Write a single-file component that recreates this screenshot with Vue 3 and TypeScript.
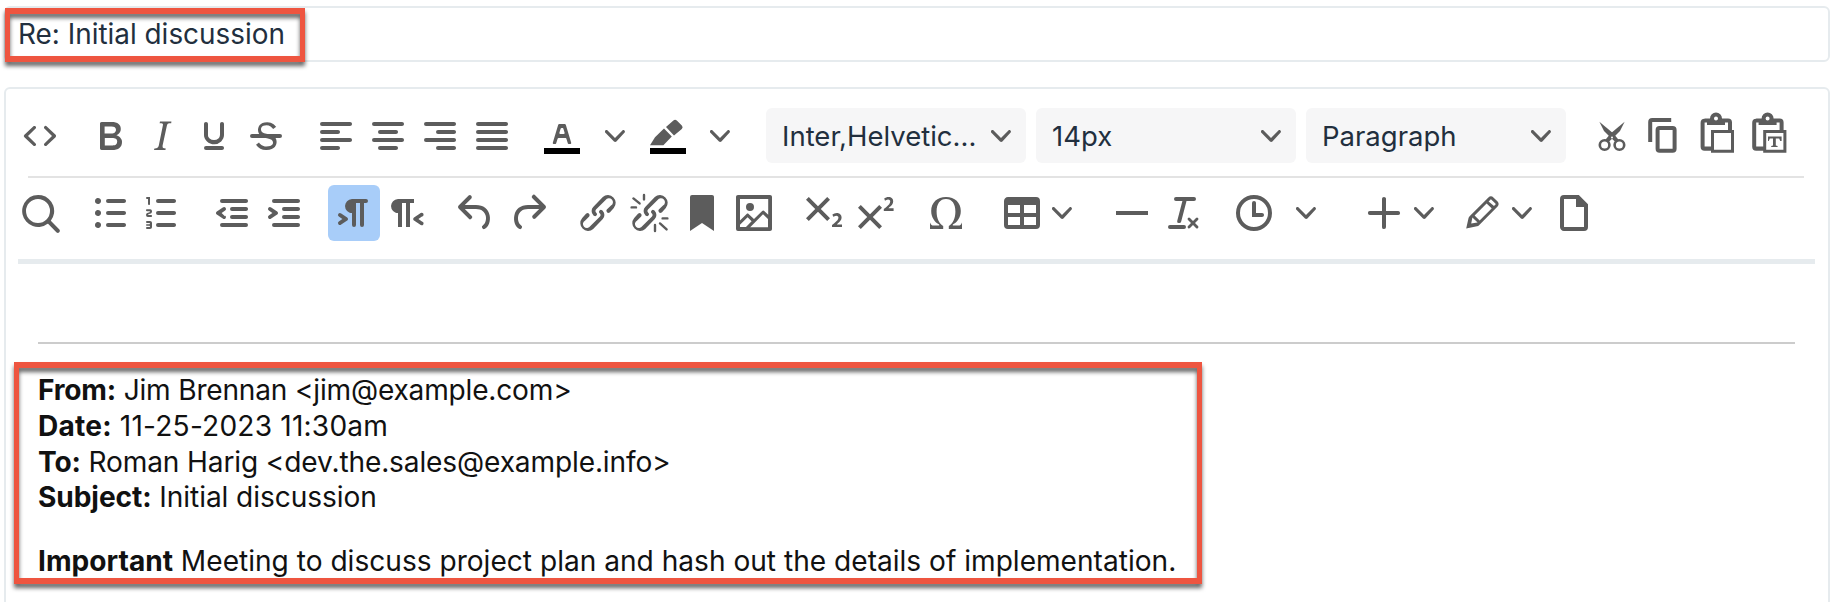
<script setup lang="ts">
type Item = { i?: string; chev?: 'lg' | 'lg2' | 'sm'; on?: boolean }
type Group = { cls?: string; items: Item[] }

const P: Record<string, string> = {
  code: 'M9.8 15.7c.3.3.3.8 0 1-.3.4-.9.4-1.2 0l-4.4-4.1a.8.8 0 0 1 0-1.2l4.4-4.2c.3-.3.9-.3 1.2 0 .3.3.3.8 0 1.1L6 12l3.8 3.7ZM14.2 15.7c-.3.3-.3.8 0 1 .4.4.9.4 1.2 0l4.4-4.1c.3-.3.3-.9 0-1.2l-4.4-4.2a.8.8 0 0 0-1.2 0c-.3.3-.3.8 0 1.1L18 12l-3.8 3.7Z',
  bold: 'M7.8 19c-.3 0-.5 0-.6-.2l-.2-.5V5.7c0-.2 0-.4.2-.5l.6-.2h5c1.5 0 2.7.3 3.5 1 .7.6 1.1 1.4 1.1 2.5a3 3 0 0 1-.6 1.9c-.4.6-1 1-1.6 1.2.4.1.9.3 1.3.6s.8.7 1 1.2c.4.4.5 1 .5 1.6 0 1.3-.4 2.3-1.3 3-.8.7-2.1 1-3.8 1H7.8Zm5-8.3c.6 0 1.2-.1 1.6-.5.4-.3.6-.7.6-1.3 0-1.1-.8-1.7-2.3-1.7H9.3v3.5h3.4Zm.5 6c.7 0 1.3-.1 1.7-.4.4-.4.6-.9.6-1.5s-.2-1-.7-1.4c-.4-.3-1-.4-2-.4H9.4v3.8h4Z',
  italic: 'm16.7 4.7-.1.9h-.3c-.6 0-1 0-1.4.3-.3.3-.4.6-.5 1.1l-2.1 9.8v.6c0 .5.4.8 1.4.8h.2l-.2.8H8l.2-.8h.2c1.1 0 1.8-.5 2-1.5l2-9.8.1-.5c0-.6-.4-.8-1.4-.8h-.3l.2-.9h5.8Z',
  underline: 'M16 5c.6 0 1 .4 1 1v5.5a4 4 0 0 1-.4 1.8l-1 1.4a5.3 5.3 0 0 1-5.5 1 5 5 0 0 1-1.6-1c-.5-.4-.8-.9-1.1-1.4a4 4 0 0 1-.4-1.8V6c0-.6.4-1 1-1s1 .4 1 1v5.5c0 .3 0 .6.2 1l.6.7a3.3 3.3 0 0 0 2.2.8 3.4 3.4 0 0 0 2.2-.8c.3-.2.4-.5.6-.8l.2-.9V6c0-.6.4-1 1-1ZM8 17h8c.6 0 1 .4 1 1s-.4 1-1 1H8a1 1 0 0 1 0-2Z',
  strike: 'M15.6 8.5c-.5-.7-1-1.1-1.3-1.3-.6-.4-1.3-.6-2-.6-2.7 0-2.8 1.7-2.8 2.1 0 1.6 1.8 2 3.2 2.3 4.4.9 4.6 2.8 4.6 3.9 0 1.4-.7 4.1-5 4.1A6.2 6.2 0 0 1 7 16.4l1.5-1.1c.4.6 1.6 2 3.7 2 1.6 0 2.5-.4 3-1 .3-.4.3-.8.3-1.1 0-1.2-1-1.7-3-2.1-1.3-.3-4.5-1-4.5-4.1 0-1.4.8-3.9 4.6-3.9 1.4 0 2.4.5 3 .9.7.4 1.1 1 1.5 1.4l-1.5 1.1ZM5 11h14a1 1 0 0 1 0 2H5a1 1 0 0 1 0-2Z',
  al: 'M5 5h14c.6 0 1 .4 1 1s-.4 1-1 1H5a1 1 0 1 1 0-2Zm0 4h8c.6 0 1 .4 1 1s-.4 1-1 1H5a1 1 0 1 1 0-2Zm0 8h8c.6 0 1 .4 1 1s-.4 1-1 1H5a1 1 0 0 1 0-2Zm0-4h14c.6 0 1 .4 1 1s-.4 1-1 1H5a1 1 0 0 1 0-2Z',
  ac: 'M5 5h14c.6 0 1 .4 1 1s-.4 1-1 1H5a1 1 0 1 1 0-2Zm3 4h8c.6 0 1 .4 1 1s-.4 1-1 1H8a1 1 0 1 1 0-2Zm0 8h8c.6 0 1 .4 1 1s-.4 1-1 1H8a1 1 0 0 1 0-2Zm-3-4h14c.6 0 1 .4 1 1s-.4 1-1 1H5a1 1 0 0 1 0-2Z',
  ar: 'M5 5h14c.6 0 1 .4 1 1s-.4 1-1 1H5a1 1 0 1 1 0-2Zm6 4h8c.6 0 1 .4 1 1s-.4 1-1 1h-8a1 1 0 0 1 0-2Zm0 8h8c.6 0 1 .4 1 1s-.4 1-1 1h-8a1 1 0 0 1 0-2Zm-6-4h14c.6 0 1 .4 1 1s-.4 1-1 1H5a1 1 0 0 1 0-2Z',
  aj: 'M5 5h14c.6 0 1 .4 1 1s-.4 1-1 1H5a1 1 0 1 1 0-2Zm0 4h14c.6 0 1 .4 1 1s-.4 1-1 1H5a1 1 0 1 1 0-2Zm0 4h14c.6 0 1 .4 1 1s-.4 1-1 1H5a1 1 0 0 1 0-2Zm0 4h14c.6 0 1 .4 1 1s-.4 1-1 1H5a1 1 0 0 1 0-2Z',
  color: 'M8.7 16h-.8a.5.5 0 0 1-.5-.6l2.7-9c.1-.3.3-.4.5-.4h2.8c.2 0 .4.1.5.4l2.7 9a.5.5 0 0 1-.5.6h-.8a.5.5 0 0 1-.4-.4l-.7-2.2c0-.3-.3-.4-.5-.4h-3.4c-.2 0-.4.1-.5.4l-.7 2.2c0 .3-.2.4-.4.4Zm2.6-7.6-.6 2a.5.5 0 0 0 .5.6h1.6a.5.5 0 0 0 .5-.6l-.6-2c0-.3-.3-.4-.5-.4h-.4c-.2 0-.4.1-.5.4Z',
  marker: 'M14.7 4.3a1.2 1.2 0 0 1 1.7 0l2.5 2.5a1.2 1.2 0 0 1 0 1.7L15 11.800 11 7.500l3.700-3.200ZM10 8.250l3.900 4-4.200 4.400H3l2.500-4L10 8.250Z',
  copy: 'M15.600 3H6.100a2 2 0 0 0-2 2v10h2V5h9.500V3ZM16.300 7H9.800a2 2 0 0 0-2 2v9.400a2 2 0 0 0 2 2h6.500a2 2 0 0 0 2-2V9a2 2 0 0 0-2-2Zm0 11.400H9.800V9h6.500v9.400Z',
  paste: 'M6.300 3.200H9a3 3 0 0 1 6 0h3a2 2 0 0 1 2 2V9h1v11.400H9.500v-1H6.300a2 2 0 0 1-2-2v-12a2 2 0 0 1 2-2ZM12 2.200a1 1 0 1 0 0 2 1 1 0 0 0 0-2ZM6.300 5.200v12h3.200V9H18V5.200h-1.500v1.300h-9V5.200h-1.200ZM11 10.500v8.400h8.500v-8.400H11Z',
  pastetext: 'M6.100 3.200H8.800a3 3 0 0 1 6 0h3a2 2 0 0 1 2 2V9h1.400v11.400H9.600v-1H6.100a2 2 0 0 1-2-2v-12a2 2 0 0 1 2-2ZM11.800 2.200a1 1 0 1 0 0 2 1 1 0 0 0 0-2ZM6.100 5.200v12h3.500V9h8.200V5.200h-1.500v1.300h-9V5.200h-1.200ZM11.100 10.500v8.400h8.600v-8.400h-8.600ZM12 12.300h6.800v2.200h-.7l-.5-1.200h-1.700v3.400l.9.3v.5h-3.200v-.5l.9-.3v-3.400h-1.600l-.5 1.200H12v-2.200Z',
  search: 'M16 17.3a8 8 0 1 1 1.4-1.4l4.3 4.4a1 1 0 0 1-1.4 1.4l-4.4-4.4Zm-5-.3a6 6 0 1 0 0-12 6 6 0 0 0 0 12Z',
  bullist: 'M11 5h8c.6 0 1 .4 1 1s-.4 1-1 1h-8a1 1 0 0 1 0-2Zm0 6h8c.6 0 1 .4 1 1s-.4 1-1 1h-8a1 1 0 0 1 0-2Zm0 6h8c.6 0 1 .4 1 1s-.4 1-1 1h-8a1 1 0 0 1 0-2ZM4.5 6c0-.4.1-.8.4-1 .3-.4.7-.5 1.1-.5.4 0 .8.1 1 .4.4.3.5.7.5 1.1 0 .4-.1.8-.4 1-.3.4-.7.5-1.1.5-.4 0-.8-.1-1-.4-.4-.3-.5-.7-.5-1.1Zm0 6c0-.4.1-.8.4-1 .3-.4.7-.5 1.1-.5.4 0 .8.1 1 .4.4.3.5.7.5 1.1 0 .4-.1.8-.4 1-.3.4-.7.5-1.1.5-.4 0-.8-.1-1-.4-.4-.3-.5-.7-.5-1.1Zm0 6c0-.4.1-.8.4-1 .3-.4.7-.5 1.1-.5.4 0 .8.1 1 .4.4.3.5.7.5 1.1 0 .4-.1.8-.4 1-.3.4-.7.5-1.1.5-.4 0-.8-.1-1-.4-.4-.3-.5-.7-.5-1.1Z',
  numlist: 'M10 17h8c.6 0 1 .4 1 1s-.4 1-1 1h-8a1 1 0 0 1 0-2Zm0-6h8c.6 0 1 .4 1 1s-.4 1-1 1h-8a1 1 0 0 1 0-2Zm0-6h8c.6 0 1 .4 1 1s-.4 1-1 1h-8a1 1 0 1 1 0-2ZM6 4v3.5c0 .3-.2.5-.5.5a.5.5 0 0 1-.5-.5V5h-.5a.5.5 0 0 1 0-1H6Zm-1 8.8.2.2h1.3c.3 0 .5.2.5.5s-.2.5-.5.5H4.900a1 1 0 0 1-.9-1V13c0-.4.3-.8.6-1l1.2-.4.2-.3a.2.2 0 0 0-.2-.2H4.500a.5.5 0 0 1-.5-.5c0-.3.2-.5.5-.5h1.600c.5 0 .9.4.9 1v.1c0 .4-.3.8-.6 1l-1.200.4-.2.3ZM7 17v2c0 .6-.4 1-1 1H4.500a.5.5 0 0 1 0-1h1.200c.2 0 .3-.1.3-.3 0-.2-.1-.3-.3-.3H4.400a.4.4 0 1 1 0-.8h1.300c.2 0 .3-.1.3-.3 0-.2-.1-.3-.3-.3H4.500a.5.5 0 1 1 0-1H6c.6 0 1 .4 1 1Z',
  outdent: 'M7 5h12c.6 0 1 .4 1 1s-.4 1-1 1H7a1 1 0 1 1 0-2Zm5 4h7c.6 0 1 .4 1 1s-.4 1-1 1h-7a1 1 0 0 1 0-2Zm0 4h7c.6 0 1 .4 1 1s-.4 1-1 1h-7a1 1 0 0 1 0-2Zm-5 4h12a1 1 0 0 1 0 2H7a1 1 0 0 1 0-2Zm1.600-3.200L6.800 12l1.800-1.200a1 1 0 0 0-1.200-1.600l-3 2a1 1 0 0 0 0 1.600l3 2a1 1 0 1 0 1.200-1.600Z',
  indent: 'M7 5h12c.6 0 1 .4 1 1s-.4 1-1 1H7a1 1 0 1 1 0-2Zm5 4h7c.6 0 1 .4 1 1s-.4 1-1 1h-7a1 1 0 0 1 0-2Zm0 4h7c.6 0 1 .4 1 1s-.4 1-1 1h-7a1 1 0 0 1 0-2Zm-5 4h12a1 1 0 0 1 0 2H7a1 1 0 0 1 0-2Zm-2.600-3.800L6.200 12l-1.800-1.200a1 1 0 0 1 1.200-1.600l3 2a1 1 0 0 1 0 1.600l-3 2a1 1 0 1 1-1.200-1.600Z',
  ltr: 'M11 5h7a1 1 0 0 1 0 2h-1v11a1 1 0 0 1-2 0V7h-2v11a1 1 0 0 1-2 0v-6c-.5 0-1 0-1.4-.3A3.4 3.4 0 0 1 7.8 10a3.3 3.3 0 0 1 0-2.8 3.4 3.4 0 0 1 1.8-1.8L11 5ZM4.4 16.2 6.2 15l-1.8-1.2a1 1 0 0 1 1.2-1.6l3 2a1 1 0 0 1 0 1.6l-3 2a1 1 0 1 1-1.2-1.6Z',
  rtl: 'M8 5h8v2h-2v12h-2V7h-2v12H8v-7c-.5 0-1 0-1.4-.3A3.4 3.4 0 0 1 4.8 10a3.3 3.3 0 0 1 0-2.8 3.4 3.4 0 0 1 1.8-1.8L8 5Zm12 11.2a1 1 0 1 1-1 1.6l-3-2a1 1 0 0 1 0-1.6l3-2a1 1 0 1 1 1 1.6L18.2 15l1.8 1.2Z',
  undo: 'M6.4 8H12c3.7 0 6.2 2 6.8 5.1.6 2.7-.4 5.6-2.3 6.8a1 1 0 0 1-1-1.8c1.1-.7 1.8-2.7 1.4-4.6-.5-2.1-2.1-3.5-4.9-3.5H6.4l3.3 3.3a1 1 0 1 1-1.4 1.4l-5-5a1 1 0 0 1 0-1.4l5-5a1 1 0 0 1 1.4 1.4L6.4 8Z',
  redo: 'M17.6 10H12c-2.8 0-4.4 1.4-4.9 3.5-.4 2 .3 3.9 1.4 4.6a1 1 0 1 1-1 1.8c-2-1.2-2.9-4.1-2.3-6.8.6-3 3-5.1 6.8-5.1h5.6l-3.3-3.3a1 1 0 1 1 1.4-1.4l5 5a1 1 0 0 1 0 1.4l-5 5a1 1 0 0 1-1.4-1.4l3.3-3.3Z',
  link: 'M6.2 12.3a1 1 0 0 1 1.4 1.4l-2 2a2 2 0 1 0 2.6 2.8l4.8-4.8a1 1 0 0 0 0-1.4 1 1 0 1 1 1.4-1.3 2.9 2.9 0 0 1 0 4L9.6 20a3.9 3.9 0 0 1-5.5-5.5l2-2.2Zm11.6-.6a1 1 0 0 1-1.4-1.4l2.1-2a2 2 0 1 0-2.7-2.8L11 10.3a1 1 0 0 0 0 1.4A1 1 0 1 1 9.6 13a2.9 2.9 0 0 1 0-4L14.4 4a3.9 3.9 0 0 1 5.5 5.5l-2 2.2Z',
  bookmark: 'M6 4v17l6-4 6 4V4c0-.6-.4-1-1-1H7a1 1 0 0 0-1 1Z',
  image: 'm5 15.7 3.3-3.2c.3-.3.7-.3 1 0L12 15l4.1-4c.3-.4.8-.4 1 0l2 1.9V5H5v10.7ZM5 18v1h3l2.8-2.9-2-2L5 17.9Zm14-3-2.5-2.4-6.4 6.5H19v-4ZM4 3h16c.6 0 1 .4 1 1v16c0 .6-.4 1-1 1H4a1 1 0 0 1-1-1V4c0-.6.4-1 1-1Zm6 8a2 2 0 1 0 0-4 2 2 0 0 0 0 4Z',
  sub: 'm10.4 10 4.6 4.6-1.4 1.4L9 11.4 4.4 16 3 14.6 7.6 10 3 5.4 4.4 4 9 8.6 13.6 4 15 5.4 10.4 10ZM21 19h-5v-1l1-.8 1.7-1.6c.3-.4.5-.8.5-1.2 0-.3 0-.6-.2-.7-.2-.2-.5-.3-.9-.3a2 2 0 0 0-.8.2l-.7.3-.4-1.1 1-.6 1.2-.2c.8 0 1.4.3 1.8.7.4.4.6.9.6 1.5s-.2 1.1-.5 1.6a8 8 0 0 1-1.3 1.3l-.6.6h2.6V19Z',
  sup: 'M15 9.4 10.4 14l4.6 4.6-1.4 1.4L9 15.4 4.4 20 3 18.6 7.6 14 3 9.4 4.4 8 9 12.6 13.6 8 15 9.4Zm5.9 1.6h-5v-1l1-.8 1.7-1.6c.3-.5.5-.9.5-1.3 0-.3 0-.5-.2-.7-.2-.2-.5-.3-.9-.3l-.8.2-.7.4-.4-1.2c.2-.2.5-.4 1-.5.3-.2.8-.2 1.2-.2.7 0 1.3.2 1.7.6.4.4.6.9.6 1.5s-.2 1.1-.5 1.6a8 8 0 0 1-1.3 1.3l-.6.6h2.6V11Z',
  omega: 'M4 20v-3.200l.5 1 .7.4h3.400v-.4C6.400 16.600 4.600 14.300 4.600 11c0-4.200 3-7 7.400-7s7.400 2.800 7.400 7c0 3.300-1.800 5.600-4 6.800v.4h3.400l.7-.4.5-1V20h-6.600v-1.500c2-1 3.300-3.700 3.300-7.200 0-3.900-1.700-6.300-4.700-6.300s-4.700 2.400-4.700 6.300c0 3.500 1.300 6.200 3.300 7.200V20H4Z',
  table: 'M19 4a2 2 0 0 1 2 2v12a2 2 0 0 1-2 2H5a2 2 0 0 1-2-2V6c0-1.1.9-2 2-2h14ZM5 14v4h6v-4H5Zm14 0h-6v4h6v-4Zm0-6h-6v4h6V8ZM5 12h6V8H5v4Z',
  hr: 'M4 11h16v2H4z',
  clear: 'M13.2 6a1 1 0 0 1 0 .2l-2.6 10a1 1 0 0 1-1 .8h-.2a.8.8 0 0 1-.8-1l2.6-10H8a1 1 0 1 1 0-2h9a1 1 0 0 1 0 2h-3.8ZM5 18h7a1 1 0 0 1 0 2H5a1 1 0 0 1 0-2Zm13 1.5L16.5 18 15 19.5a.7.7 0 0 1-1-1l1.5-1.5-1.5-1.5a.7.7 0 0 1 1-1l1.5 1.5 1.5-1.5a.7.7 0 0 1 1 1L17.5 17l1.5 1.5a.7.7 0 0 1-1 1Z',
  time: 'M12 19a7 7 0 1 0 0-14 7 7 0 0 0 0 14Zm0 2a9 9 0 1 1 0-18 9 9 0 0 1 0 18ZM16 12h-3V7c0-.6-.4-1-1-1a1 1 0 0 0-1 1v7h5c.6 0 1-.4 1-1s-.4-1-1-1Z',
  plus: 'M12 4c.5 0 1 .4 1 .9V11h6a1 1 0 0 1 .1 2H13v6a1 1 0 0 1-2 .1V13H5a1 1 0 0 1-.1-2H11V5c0-.6.4-1 1-1Z',
  pencil: 'm19.8 8.8-9.4 9.4c-.2.2-.5.4-.9.4l-5.4 1.2 1.2-5.4.5-.8 9.4-9.4c.7-.7 1.8-.7 2.5 0l2.1 2.1c.7.7.7 1.8 0 2.5Zm-2-.2 1-.9v-.3l-2.2-2.2a.3.3 0 0 0-.3 0l-1 1L18 8.5Zm-1 1-2.5-2.4-6 6 2.5 2.5 6-6Zm-7 7.1-2.6-2.4-.6 3 3.1-.6Z',
  page: 'M14.4 3H7a2 2 0 0 0-2 2v14c0 1.1.9 2 2 2h10a2 2 0 0 0 2-2V7.6L14.4 3ZM17 19H7V5h6v4h4v10Z',
}

const row1a: Group[] = [
  { items: [{ i: 'code' }] },
  { items: [{ i: 'bold' }, { i: 'italic' }, { i: 'underline' }, { i: 'strike' }] },
  { items: [{ i: 'al' }, { i: 'ac' }, { i: 'ar' }, { i: 'aj' }] },
  { items: [{ i: 'color' }, { chev: 'lg2' }, { i: 'marker' }, { chev: 'lg' }] },
]
const selects = ['Inter,Helvetic...', '14px', 'Paragraph']
const row2: Group[] = [
  { items: [{ i: 'search' }] },
  { items: [{ i: 'bullist' }, { i: 'numlist' }] },
  { items: [{ i: 'outdent' }, { i: 'indent' }] },
  { items: [{ i: 'ltr', on: true }, { i: 'rtl' }] },
  { items: [{ i: 'undo' }, { i: 'redo' }] },
  { items: [{ i: 'link' }, { i: 'unlink' }, { i: 'bookmark' }, { i: 'image' }] },
  { items: [{ i: 'sub' }, { i: 'sup' }] },
  { items: [{ i: 'omega' }] },
  { cls: 'wide6', items: [{ i: 'table' }, { chev: 'sm' }] },
  { items: [{ i: 'hr' }, { i: 'clear' }] },
  { items: [{ i: 'time' }, { chev: 'lg' }] },
  { cls: 'wide8', items: [{ i: 'plus' }, { chev: 'sm' }] },
  { items: [{ i: 'pencil' }, { chev: 'sm' }] },
  { cls: 'tight', items: [{ i: 'page' }] },
]
const clip = ['cut', 'copy', 'paste', 'pastetext']
const chevron = 'M8.7 2.2c.3-.3.8-.3 1 0 .4.4.4.9 0 1.2L5.7 7.8c-.3.3-.9.3-1.2 0L.2 3.4a.8.8 0 0 1 0-1.2c.3-.3.8-.3 1.1 0L5 6l3.7-3.8Z'
const fillRule = (name?: string) => (name === 'image' || name === 'strike' ? 'nonzero' : 'evenodd')
</script>

<template>
  <div class="page">
    <div class="subject">Re: Initial discussion</div>

    <div class="editor">
      <div class="toolbar">
        <div class="row first">
          <div v-for="(g, gi) in row1a" :key="gi" class="group">
            <template v-for="(it, ii) in g.items" :key="ii">
              <span v-if="it.chev" class="chev" :class="it.chev">
                <svg width="20" height="20" viewBox="0 0 10 10"><path :d="chevron" /></svg>
              </span>
              <span v-else class="btn">
                <svg width="48" height="48" viewBox="0 0 24 24" :fill-rule="fillRule(it.i)">
                  <path v-if="it.i === 'color' || it.i === 'marker'" d="M3 18h18v3H3z" class="black" />
                  <path :d="P[it.i as string]" />
                </svg>
              </span>
            </template>
          </div>
          <div class="group selects">
            <div v-for="s in selects" :key="s" class="select">
              <span>{{ s }}</span>
              <svg width="20" height="20" viewBox="0 0 10 10"><path :d="chevron" /></svg>
            </div>
          </div>
          <div class="group clip">
            <span v-for="c in clip" :key="c" class="btn">
              <svg v-if="c === 'cut'" width="48" height="48" viewBox="0 0 24 24">
                <path d="M5.700 4.900 12.700 10.800 15.400 14 14 15.200 11.500 13 8 9.500Z" />
                <path d="M18.300 4.900 11.300 10.800 8.600 14 10 15.200 12.500 13 16 9.500Z" />
                <circle cx="12" cy="12.800" r=".5" fill="#fff" />
                <circle cx="8.300" cy="16.500" r="2.400" fill="none" stroke="#5c5c5c" stroke-width="1.300" />
                <circle cx="15.700" cy="16.500" r="2.400" fill="none" stroke="#5c5c5c" stroke-width="1.300" />
              </svg>
              <svg v-else width="48" height="48" viewBox="0 0 24 24" fill-rule="evenodd"><path :d="P[c]" /></svg>
            </span>
          </div>
        </div>
        <div class="sep"></div>
        <div class="row second">
          <div v-for="(g, gi) in row2" :key="gi" class="group" :class="g.cls">
            <template v-for="(it, ii) in g.items" :key="ii">
              <span v-if="it.chev" class="chev" :class="it.chev">
                <svg width="20" height="20" viewBox="0 0 10 10"><path :d="chevron" /></svg>
              </span>
              <span v-else class="btn" :class="{ on: it.on }">
                <svg v-if="it.i === 'unlink'" width="48" height="48" viewBox="0 0 24 24">
                  <path fill-rule="evenodd" :d="P.link" />
                  <path class="spike" d="M3.700 4.700 6.800 7.200M9 3v2.200M2.800 9.200H5M18.300 14.700h2.400M17 17.200l3.300 3M14.500 18v3" />
                </svg>
                <svg v-else width="48" height="48" viewBox="0 0 24 24" :fill-rule="fillRule(it.i)">
                  <path :d="P[it.i as string]" />
                </svg>
              </span>
            </template>
          </div>
        </div>
      </div>
      <div class="toolbar-line"></div>

      <div class="content">
        <hr class="rule" />
        <div class="headers">
          <div class="l-from"><b>From:</b> Jim Brennan &lt;jim@example.com&gt;</div>
          <div class="l-date"><b>Date:</b> 11-25-2023 11:30am</div>
          <div class="l-to"><b>To:</b> Roman Harig &lt;dev.the.sales@example.info&gt;</div>
          <div class="l-subj"><b>Subject:</b> Initial discussion</div>
        </div>
        <p class="body"><b>Important</b> Meeting to discuss project plan and hash out the details of implementation.</p>
      </div>
    </div>

    <div class="mark mark-subject"></div>
    <div class="mark mark-body"></div>
  </div>
</template>

<style scoped>
.page {
  position: relative;
  width: 1842px;
  height: 602px;
  overflow: hidden;
  background: #fff;
  padding: 6px 12px 0 4px;
  box-sizing: border-box;
  font-family: Inter, "Liberation Sans", sans-serif;
}
.subject {
  height: 56px;
  box-sizing: border-box;
  border: 2px solid #e6ebee;
  border-radius: 6px;
  padding-left: 12px;
  line-height: 52px;
  color: #222f3e;
  font-size: 27.9px;
}
.editor {
  margin-top: 25px;
  height: 600px;
  box-sizing: border-box;
  border: 2px solid #e6ebee;
  border-radius: 6px 6px 0 0;
}
.toolbar {
  margin-right: 13px;
  padding-top: 19px;
  height: 170px;
  box-sizing: border-box;
  font-size: 27.5px;
}
.toolbar-line {
  height: 5px;
  margin: 0 13px 0 12px;
  background: #e6ebee;
}
.row { display: flex; align-items: center; padding-left: 8px; gap: 18px; }
.first { height: 55px; }
.second { height: 56px; margin-top: 7px; }
.group { display: flex; align-items: center; }
.btn {
  width: 52px;
  height: 56px;
  flex: none;
  display: flex;
  align-items: center;
  justify-content: center;
  border-radius: 6px;
}
.btn.on { background: #a8cdf9; }
.chev { display: flex; align-items: center; justify-content: center; flex: none; height: 56px; }
.chev.lg { width: 52px; }
.chev.lg2 { width: 54px; }
.chev.sm { width: 28px; }
svg { display: block; fill: #5c5c5c; }
.black { fill: #000; }
.spike { fill: none; stroke: #5c5c5c; stroke-width: 1.2; stroke-linecap: round; }
.selects { gap: 10px; margin-left: 2px; margin-right: 2px; }
.select {
  width: 260px;
  height: 55px;
  box-sizing: border-box;
  background: #f6f6f7;
  border-radius: 6px;
  padding: 0 15px 0 16px;
  display: flex;
  align-items: center;
  justify-content: space-between;
  color: #222f3e;
}
.sep {
  height: 2px;
  background: #e3e3e3;
  margin: 13px 11px 0 22px;
}
.wide6 { margin-left: 6px; margin-right: 12px; }
.wide8 { margin-left: 8px; }
.tight { margin-left: -6px; }
.content { padding: 0 33px 0 32px; color: #111; line-height: 35.8px; font-size: 28.1px; }
.rule { border: 0; height: 2px; background: #cccccc; margin: 78px 0 0; }
.headers { margin-top: 29px; }
.l-from { letter-spacing: -0.2px; }
.l-date { letter-spacing: 0.2px; }
.l-to { letter-spacing: -0.14px; }
.l-subj { letter-spacing: -0.08px; }
.body { margin: 27.5px 0 0; }
b { font-weight: 700; }
.mark {
  position: absolute;
  box-sizing: border-box;
  border: solid #ee5540;
  border-width: 6px 5px;
  filter: drop-shadow(0 4px 2px rgba(0, 0, 0, 0.6));
}
.mark-subject { left: 5px; top: 8px; width: 300px; height: 54px; }
.mark-body { left: 14px; top: 362px; width: 1188px; height: 222px; }
</style>
